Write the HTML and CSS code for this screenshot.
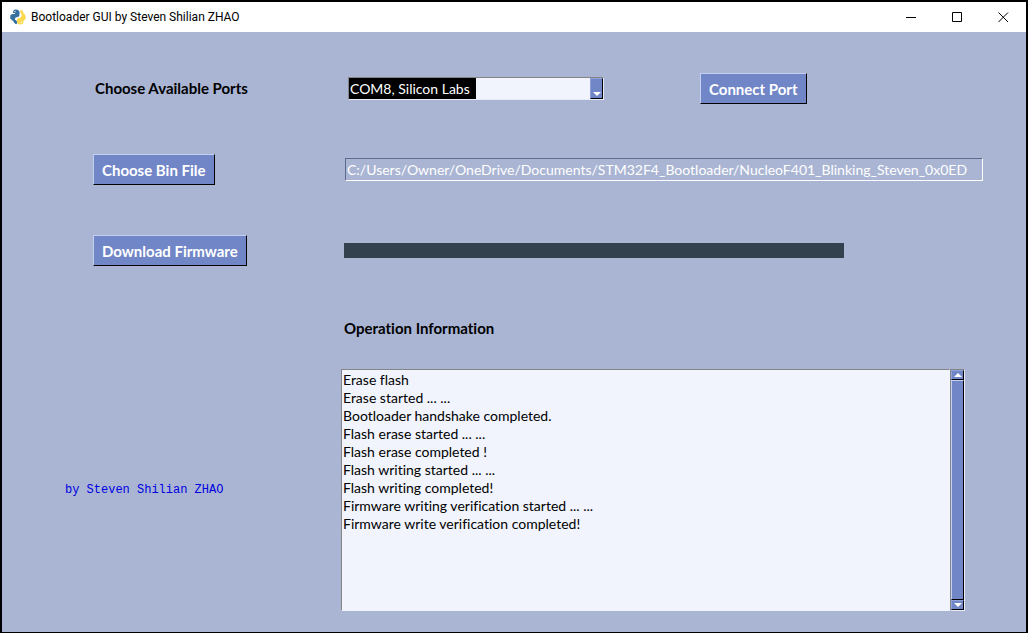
FILE: index.html
```html
<!DOCTYPE html>
<html lang="en">
<head>
<meta charset="utf-8">
<meta name="viewport" content="width=device-width, initial-scale=1">
<title>Bootloader GUI by Steven Shilian ZHAO</title>
<link rel="stylesheet" href="styles.css">
</head>
<body>
<div class="window">
  <header class="titlebar">
    <svg class="app-icon" viewBox="0 0 16 16" aria-hidden="true">
      <path fill="#37709f" d="M3 3.500Q3 .5 6 .5Q9 .5 9.500 3V6Q9.500 8 7.500 8Q5 8 5 10V12H3.500Q1.500 11.500 1 10H.3V6.500Q.5 5 3 5H5V4H3z"/>
      <path fill="#37709f" d="M3 11Q3.500 14.500 6.500 15.300L7.500 13.500 6 11z"/>
      <path fill="#fbd94f" d="M10.500 1Q13.500 1 13.500 4.500Q15.700 5 15.700 8V9.500Q15.500 11 13.500 11.500V13Q13 15.500 10 15.500Q7.500 15.500 7 13V11Q7 9 9 9Q11.500 9 11.500 7V5L10 3z"/>
      <circle cx="5" cy="2.600" r=".7" fill="#fff"/>
      <circle cx="11.300" cy="13.300" r=".7" fill="#fff"/>
    </svg>
    <h1 class="title">Bootloader GUI by Steven Shilian ZHAO</h1>
    <div class="window-controls">
      <button class="window-button" aria-label="Minimize"><svg viewBox="0 0 11 11"><path d="M0 5.500H10"/></svg></button>
      <button class="window-button" aria-label="Maximize"><svg viewBox="0 0 11 11"><path d="M.5.5H9.500V9.500H.5z"/></svg></button>
      <button class="window-button" aria-label="Close"><svg viewBox="0 0 11 11"><path d="M.5.5L10 10M10 .5L.5 10"/></svg></button>
    </div>
  </header>
  <main class="form">
    <div class="label-cell"><label class="heading" for="port">Choose Available Ports</label></div>
    <div class="field-cell port-row">
      <div class="combo">
        <select class="combo-select" id="port"><option>COM8, Silicon Labs</option></select>
        <span class="combo-arrow"><svg viewBox="0 0 8 4" aria-hidden="true"><path d="M0 0H8L4 4z"/></svg></span>
      </div>
      <button class="button">Connect Port</button>
    </div>

    <div class="label-cell"><button class="button">Choose Bin File</button></div>
    <div class="field-cell"><input class="path" type="text" aria-label="Bin file" value="C:/Users/Owner/OneDrive/Documents/STM32F4_Bootloader/NucleoF401_Blinking_Steven_0x0ED"></div>

    <div class="label-cell"><button class="button">Download Firmware</button></div>
    <div class="field-cell"><div class="progress" role="progressbar" aria-label="Download progress" aria-valuenow="100"></div></div>

    <div class="field-cell info-heading"><label class="heading" for="log">Operation Information</label></div>

    <p class="byline">by Steven Shilian ZHAO</p>
    <div class="log">
      <textarea class="log-text" id="log" readonly>Erase flash
Erase started ... ...
Bootloader handshake completed.
Flash erase started ... ...
Flash erase completed !
Flash writing started ... ...
Flash writing completed!
Firmware writing verification started ... ...
Firmware write verification completed!</textarea>
      <div class="scrollbar">
        <button class="scroll-button" aria-label="Scroll up"><svg viewBox="0 0 8 4"><path d="M0 4H8L4 0z"/></svg></button>
        <div class="scroll-thumb"></div>
        <button class="scroll-button" aria-label="Scroll down"><svg viewBox="0 0 8 4"><path d="M0 0H8L4 4z"/></svg></button>
      </div>
    </div>
  </main>
</div>
</body>
</html>
```
FILE: styles.css
```css
* { box-sizing: border-box; }

body {
  margin: 0;
  color: #000;
  font: 14px/18px Lato, "Open Sans", sans-serif;
  font-variant-ligatures: none;
}

button, input, select, textarea {
  font: inherit;
  font-variant-ligatures: none;
  border-radius: 0;
}

.window {
  display: flex;
  flex-direction: column;
  min-height: 100vh;
  border: 2px solid #000;
  border-bottom-width: 1px;
  background: #aab5d4;
}

.titlebar {
  display: flex;
  align-items: center;
  height: 30px;
  padding-left: 8px;
  background: #fff;
}

.app-icon { width: 16px; height: 16px; }

.title {
  flex: 1;
  margin: 0 0 0 5px;
  font: 12px/16px Roboto, sans-serif;
}

.window-controls { display: flex; align-self: stretch; }

.window-button {
  display: grid;
  place-items: center;
  width: 46px;
  padding: 0;
  border: 0;
  background: none;
}

.window-button svg {
  width: 11px;
  height: 11px;
  fill: none;
  stroke: #000;
}

.form {
  flex: 1;
  display: grid;
  grid-template-columns: 276px minmax(0, 1fr);
  grid-template-rows: 81px 81px 81px 74px minmax(242px, 1fr);
  align-items: center;
  padding: 16px 43px 21px 63px;
}

.label-cell { padding-left: 28px; }
.field-cell { padding-left: 4px; }

.heading {
  font-size: 15px;
  font-weight: 700;
}

.label-cell .heading { padding-left: 2px; }

.button {
  height: 31px;
  padding: 0 8px;
  border: 1px solid;
  border-color: #c3d0f4 #000 #000 #c3d0f4;
  background: #7186c7;
  color: #fff;
  font-size: 15px;
  font-weight: 700;
}

.port-row {
  display: flex;
  align-items: center;
  gap: 96px;
  padding-left: 7px;
}

.combo {
  display: flex;
  width: 256px;
  height: 23px;
  border: 1px solid;
  border-color: #858585 #e8ecf8 #e8ecf8 #858585;
}

.combo-select {
  flex: 1;
  appearance: none;
  padding: 0 1px;
  border: 0;
  background: linear-gradient(#000, #000) no-repeat 0 0 / 127px 100% #f1f4fd;
  color: #fff;
}

.combo-arrow {
  display: grid;
  place-items: end center;
  width: 13px;
  padding-bottom: 2px;
  border: 1px solid;
  border-color: #8fa1d8 #000 #000 #8fa1d8;
  background: #7186c7;
}

.combo-arrow svg, .scroll-button svg {
  width: 8px;
  height: 4px;
  fill: #fff;
}

.path {
  display: block;
  width: 100%;
  height: 23px;
  padding: 0 1px;
  border: 1px solid;
  border-color: #5f6b8b #fff #fff #5f6b8b;
  background: transparent;
  color: #fff;
}

.progress {
  width: 500px;
  max-width: 100%;
  height: 15px;
  margin-left: -1px;
  background: #33414e;
}

.info-heading { grid-column: 2; padding-left: 3px; }

.byline {
  margin: 4px 0 0;
  color: #0000e0;
  font: 12px/16px "Liberation Mono", monospace;
}

.log {
  display: flex;
  align-self: stretch;
  margin: 4px 18px 0 0;
}

.log-text {
  flex: 1;
  padding: 1px;
  border: 1px solid;
  border-color: #858585 #f1f4fd #f1f4fd #858585;
  background: #f1f4fd;
  color: #000;
  resize: none;
}

.scrollbar {
  display: flex;
  flex-direction: column;
  width: 15px;
  border: 1px solid;
  border-color: #858585 #e8ecf8 #e8ecf8 #858585;
}

.scroll-button {
  display: grid;
  place-items: center;
  height: 10px;
  padding: 0;
  border: 1px solid;
  border-color: #8fa1d8 #000 #000 #8fa1d8;
  background: #7186c7;
}

.scroll-thumb {
  flex: 1;
  border: 1px solid;
  border-color: #c3d0f4 #000 #000 #c3d0f4;
  background: #7186c7;
}
```
